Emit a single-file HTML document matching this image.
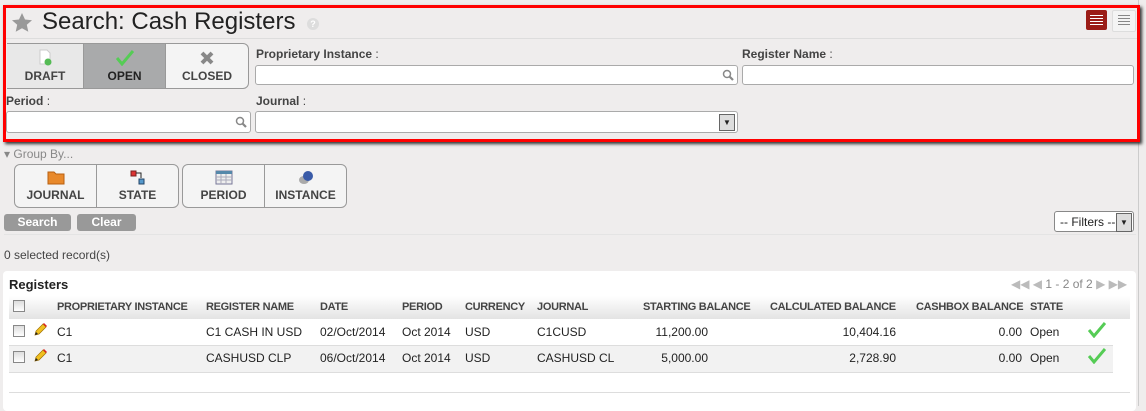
<!DOCTYPE html><html><head><style>
body{margin:0;width:1146px;height:406px;background:#efeded;font-family:"Liberation Sans",sans-serif;position:relative;overflow:hidden;font-size:12px;color:#222}
.a{position:absolute}
.lbl{font-size:12px;font-weight:bold;color:#444}
.inp{position:absolute;height:20px;background:#fff;border:1px solid #aaa;border-radius:3px;box-sizing:border-box}
.btn{position:absolute;border:1px solid #999;border-radius:6px;background:#f4f4f4;overflow:hidden;display:flex}
.btn div{text-align:center;font-weight:bold;font-size:12px;color:#444;border-right:1px solid #999;box-sizing:border-box;padding-top:5px}
.btn div:last-child{border-right:none}
.btn svg{display:block;margin:0 auto 3px}
.th{position:absolute;top:301px;font-size:11px;font-weight:bold;color:#444;letter-spacing:-0.3px}
.td{position:absolute;font-size:12px}
.cb{position:absolute;width:10px;height:10px;border:1px solid #888;background:linear-gradient(#ddd,#fff)}
</style></head><body>
<div class="a" style="left:1138px;top:0;width:1px;height:406px;background:#ccc"></div>
<div class="a" style="left:3px;top:5px;width:1131px;height:131px;border:3px solid #f00;box-shadow:2px 2px 3px #333"></div>
<div class="a" style="left:6px;top:38px;width:1131px;height:1px;background:#ddd"></div>
<svg class="a" style="left:12px;top:13px" width="20" height="19" viewBox="0 0 20 19"><path d="M10 0l3 6.5 7 .7-5.2 4.6 1.5 7L10 15.2 3.7 18.8l1.5-7L0 7.2l7-.7z" fill="#999"/></svg>
<div class="a" style="left:42px;top:8px;font-size:24px;color:#222">Search: Cash Registers</div>
<div class="a" style="left:307px;top:18px;width:12px;height:12px;border-radius:6px;background:#ddd;color:#fff;font-size:9px;text-align:center;line-height:12px;font-weight:bold">?</div>
<div class="a" style="left:1086px;top:10px;width:21px;height:20px;background:#9b1c16;border-radius:2px"><div style="margin:5px 4px;height:10px;background:repeating-linear-gradient(#fff 0 1px,transparent 1px 3px)"></div></div>
<div class="a" style="left:1112px;top:10px;width:22px;height:20px;background:#f4f4f4;border:1px solid #ddd;border-radius:2px"><div style="margin:4px 5px;height:10px;background:repeating-linear-gradient(#888 0 1px,transparent 1px 3px)"></div></div>
<div class="btn" style="left:7px;top:43px;width:241px;height:44px;border-left:none;border-radius:0 6px 6px 0">
<div style="width:77px;background:#e8e8e8"><svg width="16" height="17" viewBox="0 0 16 17"><path d="M3 1h7l3 3v11H3z" fill="#fff" stroke="#ccc"/><circle cx="11" cy="13" r="3.5" fill="#5b5"/></svg>DRAFT</div>
<div style="width:82px;background:#a9aaab;color:#222"><svg width="18" height="17" viewBox="0 0 18 17"><path d="M1 9l5 6L17 2" fill="none" stroke="#5c5" stroke-width="3"/></svg>OPEN</div>
<div style="width:82px"><svg width="16" height="17" viewBox="0 0 16 17"><path d="M3 4l10 10M13 4L3 14" stroke="#888" stroke-width="4"/></svg>CLOSED</div></div>
<div class="a lbl" style="left:256px;top:47px">Proprietary Instance <span style="font-weight:normal">:</span></div>
<div class="inp" style="left:255px;top:65px;width:483px"><svg class="a" style="right:3px;top:3px" width="12" height="12" viewBox="0 0 12 12"><circle cx="5" cy="5" r="3.5" fill="none" stroke="#888" stroke-width="1.5"/><path d="M7.5 7.5L11 11" stroke="#888" stroke-width="2.2"/></svg></div>
<div class="a lbl" style="left:742px;top:47px">Register Name <span style="font-weight:normal">:</span></div>
<div class="inp" style="left:742px;top:65px;width:392px"></div>
<div class="a lbl" style="left:6px;top:94px">Period <span style="font-weight:normal">:</span></div>
<div class="inp" style="left:6px;top:111px;width:245px;height:22px"><svg class="a" style="right:3px;top:4px" width="12" height="12" viewBox="0 0 12 12"><circle cx="5" cy="5" r="3.5" fill="none" stroke="#888" stroke-width="1.5"/><path d="M7.5 7.5L11 11" stroke="#888" stroke-width="2.2"/></svg></div>
<div class="a lbl" style="left:256px;top:94px">Journal <span style="font-weight:normal">:</span></div>
<div class="inp" style="left:255px;top:111px;width:483px;height:22px"><span class="a" style="right:2px;top:2px;width:14px;height:15px;border:1px solid #666;background:#ddd;font-size:8px;text-align:center;line-height:15px">▼</span></div>
<div class="a" style="left:4px;top:147px;font-size:12px;color:#888">▾ Group By...</div>
<div class="btn" style="left:14px;top:164px;width:163px;height:42px"><div style="width:82px"><svg width="18" height="15" viewBox="0 0 18 15"><path d="M1 2h6l2 2h8v10H1z" fill="#e8892b" stroke="#b86010"/></svg>JOURNAL</div><div style="width:81px"><svg width="16" height="15" viewBox="0 0 16 15"><rect x="1" y="1" width="5" height="5" fill="#d33" stroke="#722"/><rect x="9" y="9" width="5" height="5" fill="#59c" stroke="#246"/><path d="M6 3h5v5" fill="none" stroke="#222"/></svg>STATE</div></div>
<div class="btn" style="left:182px;top:164px;width:163px;height:42px"><div style="width:82px"><svg width="18" height="15" viewBox="0 0 18 15"><rect x="1" y="1" width="16" height="13" fill="#eee" stroke="#779"/><rect x="1" y="1" width="16" height="3" fill="#58a"/><path d="M1 7h16M1 10h16M6 4v10M11 4v10" stroke="#aab"/></svg>PERIOD</div><div style="width:81px"><svg width="18" height="15" viewBox="0 0 18 15"><ellipse cx="7" cy="10" rx="5" ry="4" fill="#aaa"/><circle cx="11" cy="6" r="5" fill="#3a5ba8"/></svg>INSTANCE</div></div>
<div class="a" style="left:4px;top:214px;width:67px;height:17px;background:#999;border-radius:3px;color:#fff;font-weight:bold;text-align:center;line-height:17px">Search</div>
<div class="a" style="left:77px;top:214px;width:59px;height:17px;background:#999;border-radius:3px;color:#fff;font-weight:bold;text-align:center;line-height:17px">Clear</div>
<div class="a" style="left:1054px;top:211px;width:80px;height:21px;background:#fff;border:1px solid #888;border-radius:3px;box-sizing:border-box;padding:3px 5px">-- Filters --<span class="a" style="right:1px;top:1px;width:14px;height:17px;border:1px solid #666;background:#ddd;font-size:8px;text-align:center;line-height:17px">▼</span></div>
<div class="a" style="left:4px;top:234px;width:1132px;height:1px;background:#e4e4e4"></div>
<div class="a" style="left:4px;top:248px;color:#444">0 selected record(s)</div>
<div class="a" style="left:3px;top:271px;width:1133px;height:140px;background:#fff;border-radius:4px"></div>
<div class="a" style="left:9px;top:277px;font-weight:bold;font-size:13px;color:#222">Registers</div>
<div class="a" style="left:1011px;top:277px;font-size:12px;color:#bbb">◀◀ ◀ <span style="color:#888">1 - 2 of 2</span> ▶ ▶▶</div>
<div class="a" style="left:9px;top:296px;width:1121px;height:23px;background:linear-gradient(#fff,#e3e3e3)"></div>
<div class="cb" style="left:13px;top:300px"></div>
<div class="th" style="left:57px">PROPRIETARY INSTANCE</div><div class="th" style="left:206px">REGISTER NAME</div><div class="th" style="left:320px">DATE</div><div class="th" style="left:402px">PERIOD</div><div class="th" style="left:465px">CURRENCY</div><div class="th" style="left:537px">JOURNAL</div><div class="th" style="left:643px">STARTING BALANCE</div><div class="th" style="left:770px">CALCULATED BALANCE</div><div class="th" style="left:916px">CASHBOX BALANCE</div><div class="th" style="left:1030px">STATE</div>
<div class="a" style="left:9px;top:345px;width:1104px;height:26px;background:#f2f2f2;border-top:1px solid #ddd;border-bottom:1px solid #ddd"></div>
<div class="a" style="left:9px;top:392px;width:1121px;height:1px;background:#ddd"></div>
<div class="cb" style="left:13px;top:325px"></div><div class="cb" style="left:13px;top:351px"></div>
<svg class="a" style="left:33px;top:323px" width="14" height="14" viewBox="0 0 14 14"><path d="M2 12l1-4 7-7 3 3-7 7z" fill="#f0c020" stroke="#a07000" stroke-width=".7"/><path d="M10 1l3 3 1-1-3-3z" fill="#d22"/><path d="M2 12l1-3 2 2z" fill="#222"/></svg>
<svg class="a" style="left:33px;top:349px" width="14" height="14" viewBox="0 0 14 14"><path d="M2 12l1-4 7-7 3 3-7 7z" fill="#f0c020" stroke="#a07000" stroke-width=".7"/><path d="M10 1l3 3 1-1-3-3z" fill="#d22"/><path d="M2 12l1-3 2 2z" fill="#222"/></svg>
<div class="td" style="left:57px;top:325px">C1</div><div class="td" style="left:206px;top:325px">C1 CASH IN USD</div><div class="td" style="left:320px;top:325px">02/Oct/2014</div><div class="td" style="left:402px;top:325px">Oct 2014</div><div class="td" style="left:465px;top:325px">USD</div><div class="td" style="left:537px;top:325px">C1CUSD</div><div class="td" style="right:438px;top:325px">11,200.00</div><div class="td" style="right:250px;top:325px">10,404.16</div><div class="td" style="right:124px;top:325px">0.00</div><div class="td" style="left:1030px;top:325px">Open</div>
<svg class="a" style="left:1088px;top:322px" width="18" height="16" viewBox="0 0 18 16"><path d="M1 8l5 6L17 1" fill="none" stroke="#5c5" stroke-width="3"/></svg>
<div class="td" style="left:57px;top:351px">C1</div><div class="td" style="left:206px;top:351px">CASHUSD CLP</div><div class="td" style="left:320px;top:351px">06/Oct/2014</div><div class="td" style="left:402px;top:351px">Oct 2014</div><div class="td" style="left:465px;top:351px">USD</div><div class="td" style="left:537px;top:351px">CASHUSD CL</div><div class="td" style="right:438px;top:351px">5,000.00</div><div class="td" style="right:250px;top:351px">2,728.90</div><div class="td" style="right:124px;top:351px">0.00</div><div class="td" style="left:1030px;top:351px">Open</div>
<svg class="a" style="left:1088px;top:348px" width="18" height="16" viewBox="0 0 18 16"><path d="M1 8l5 6L17 1" fill="none" stroke="#5c5" stroke-width="3"/></svg>
</body></html>
